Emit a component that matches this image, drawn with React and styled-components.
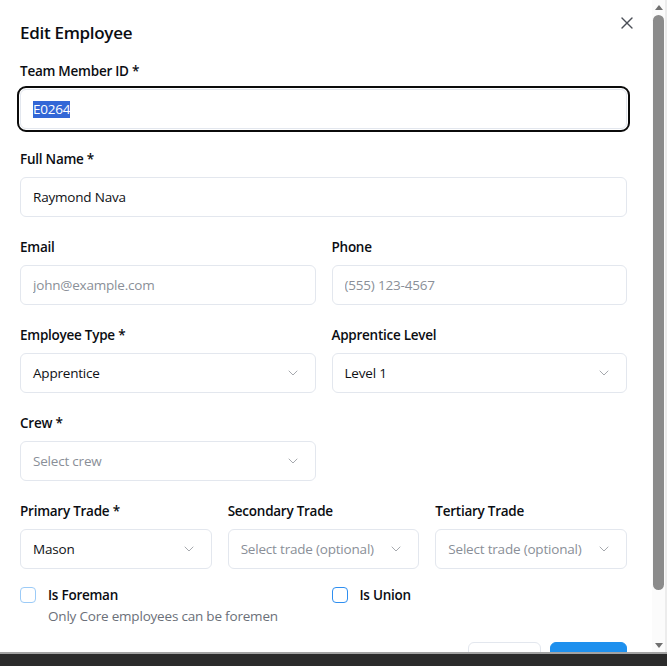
import React from 'react';
import styled, { createGlobalStyle } from 'styled-components';
import { X, ChevronDown } from 'lucide-react';

const GlobalStyle = createGlobalStyle`
  html, body {
    margin: 0;
    padding: 0;
    height: 100%;
    overflow: hidden;
    background: #ffffff;
  }
  body {
    font-family: 'Open Sans', 'Noto Sans', Arial, sans-serif;
    color: #0f1115;
  }
  * {
    box-sizing: border-box;
  }
`;

const Screen = styled.div`
  display: flex;
  flex-direction: column;
  height: 666px;
`;

const Window = styled.div`
  flex: 1;
  min-height: 0;
  display: flex;
`;

const Viewport = styled.div`
  flex: 1;
  min-width: 0;
  overflow: hidden;
  background: #ffffff;
`;

const Scrollbar = styled.div`
  width: 15px;
  flex-shrink: 0;
  display: flex;
  flex-direction: column;
  align-items: center;
  background: #fbfbfb;
  border-right: 2px solid #ececec;
`;

const Arrow = styled.span`
  height: 14px;
  display: flex;
  align-items: center;
  justify-content: center;

  &::before {
    content: '';
    border-left: 4.5px solid transparent;
    border-right: 4.5px solid transparent;
    ${(p) =>
      p.$down
        ? 'border-top: 5px solid #707070; margin-top: 1px;'
        : 'border-bottom: 5px solid #707070; margin-top: 1px;'}
  }
`;

const Track = styled.div`
  flex: 1;
  width: 100%;
  display: flex;
  justify-content: center;
  padding-top: 1px;
`;

const Thumb = styled.div`
  width: 11px;
  height: 575px;
  border-radius: 6px;
  background: #8b8b8b;
`;

const Dialog = styled.div`
  position: relative;
  padding: 19px 25px 24px 20px;
`;

const Title = styled.h2`
  margin: 0 0 14px;
  font-size: 17px;
  line-height: 28px;
  font-weight: 600;
  letter-spacing: -0.3px;
  color: #0b0d12;
`;

const CloseButton = styled.button`
  position: absolute;
  top: 13px;
  right: 15px;
  display: flex;
  padding: 0;
  border: 0;
  background: none;
  color: #4b4f57;
  cursor: pointer;
`;

const Form = styled.div`
  display: flex;
  flex-direction: column;
  gap: 20px;
`;

const Row = styled.div`
  display: grid;
  grid-template-columns: repeat(${(p) => p.$cols || 1}, 1fr);
  gap: 16px;
`;

const Field = styled.div`
  display: flex;
  flex-direction: column;
  gap: 8px;
  min-width: 0;
`;

const Label = styled.label`
  font-size: 13.5px;
  line-height: 20px;
  font-weight: 600;
  letter-spacing: -0.25px;
  color: #0b0d12;
`;

const Input = styled.input`
  height: 40px;
  width: 100%;
  padding: 0 12px;
  border: 1px solid #e3e7ee;
  border-radius: 6px;
  font-family: inherit;
  font-size: 13.5px;
  letter-spacing: -0.2px;
  color: #0f1115;
  background: #ffffff;
  outline: none;

  &::placeholder {
    color: #8a8f98;
  }
`;

const FocusedBox = styled.div`
  height: 40px;
  display: flex;
  align-items: center;
  padding: 0 12px;
  border: 1px solid #e3e7ee;
  border-radius: 6px;
  outline: 2px solid #0b0b0b;
  outline-offset: 1px;
  font-size: 13.5px;
  letter-spacing: -0.2px;
`;

const Selected = styled.span`
  background: #3367d6;
  color: #ffffff;
  line-height: 17px;
`;

const Select = styled.div`
  height: 40px;
  display: flex;
  align-items: center;
  justify-content: space-between;
  gap: 8px;
  padding: 0 14px 0 12px;
  border: 1px solid #e3e7ee;
  border-radius: 6px;
  font-size: 13.5px;
  letter-spacing: -0.2px;
  white-space: nowrap;
  overflow: hidden;
  color: ${(p) => (p.$placeholder ? '#8a8f98' : '#0f1115')};

  svg {
    flex-shrink: 0;
    color: #a6a9ae;
  }
`;

const Checks = styled.div`
  display: grid;
  grid-template-columns: 1fr 1fr;
  align-items: start;
  gap: 16px;
  margin-top: -4px;
`;

const CheckItem = styled.div`
  display: grid;
  grid-template-columns: 16px 1fr;
  column-gap: 12px;
  align-items: center;
`;

const Box = styled.span`
  width: 16px;
  height: 16px;
  border-radius: 4px;
  border: 1px solid ${(p) => (p.$strong ? '#2f8ff0' : '#9ccbf7')};
  background: #ffffff;
`;

const CheckLabel = styled.span`
  font-size: 13.5px;
  line-height: 20px;
  font-weight: 600;
  letter-spacing: -0.25px;
  color: #0b0d12;
`;

const Hint = styled.span`
  grid-column: 2;
  margin-top: 1px;
  font-size: 13.5px;
  line-height: 20px;
  letter-spacing: -0.2px;
  color: #6b7079;
`;

const Footer = styled.div`
  display: flex;
  justify-content: flex-end;
  gap: 9px;
  margin-top: 16px;
`;

const Button = styled.button`
  height: 40px;
  padding: 0 14.5px;
  border-radius: 6px;
  font-family: inherit;
  font-size: 13.5px;
  font-weight: 600;
  letter-spacing: -0.25px;
  border: 1px solid ${(p) => (p.$primary ? '#1e90ee' : '#e3e7ee')};
  background: ${(p) => (p.$primary ? '#1e90ee' : '#ffffff')};
  color: ${(p) => (p.$primary ? '#ffffff' : '#0f1115')};
`;

const Taskbar = styled.div`
  height: 14px;
  flex-shrink: 0;
  background: #2b2b2b;
  border-top: 2px solid #a3a3a3;
`;

const SelectBox = ({ value, placeholder }) => (
  <Select $placeholder={!value}>
    <span>{value || placeholder}</span>
    <ChevronDown size={16} strokeWidth={1.5} />
  </Select>
);

export default function App() {
  return (
    <>
      <GlobalStyle />
      <Screen>
        <Window>
          <Viewport>
            <Dialog>
              <Title>Edit Employee</Title>
              <CloseButton aria-label="Close">
                <X size={20} strokeWidth={1.6} />
              </CloseButton>
              <Form>
                <Field>
                  <Label>Team Member ID *</Label>
                  <FocusedBox>
                    <Selected>E0264</Selected>
                  </FocusedBox>
                </Field>
                <Field>
                  <Label>Full Name *</Label>
                  <Input defaultValue="Raymond Nava" />
                </Field>
                <Row $cols={2}>
                  <Field>
                    <Label>Email</Label>
                    <Input placeholder="john@example.com" />
                  </Field>
                  <Field>
                    <Label>Phone</Label>
                    <Input placeholder="(555) 123-4567" />
                  </Field>
                </Row>
                <Row $cols={2}>
                  <Field>
                    <Label>Employee Type *</Label>
                    <SelectBox value="Apprentice" />
                  </Field>
                  <Field>
                    <Label>Apprentice Level</Label>
                    <SelectBox value="Level 1" />
                  </Field>
                </Row>
                <Row $cols={2}>
                  <Field>
                    <Label>Crew *</Label>
                    <SelectBox placeholder="Select crew" />
                  </Field>
                </Row>
                <Row $cols={3}>
                  <Field>
                    <Label>Primary Trade *</Label>
                    <SelectBox value="Mason" />
                  </Field>
                  <Field>
                    <Label>Secondary Trade</Label>
                    <SelectBox placeholder="Select trade (optional)" />
                  </Field>
                  <Field>
                    <Label>Tertiary Trade</Label>
                    <SelectBox placeholder="Select trade (optional)" />
                  </Field>
                </Row>
                <Checks>
                  <CheckItem>
                    <Box />
                    <CheckLabel>Is Foreman</CheckLabel>
                    <Hint>Only Core employees can be foremen</Hint>
                  </CheckItem>
                  <CheckItem>
                    <Box $strong />
                    <CheckLabel>Is Union</CheckLabel>
                  </CheckItem>
                </Checks>
              </Form>
              <Footer>
                <Button>Cancel</Button>
                <Button $primary>Update</Button>
              </Footer>
            </Dialog>
          </Viewport>
          <Scrollbar>
            <Arrow />
            <Track>
              <Thumb />
            </Track>
            <Arrow $down />
          </Scrollbar>
        </Window>
        <Taskbar />
      </Screen>
    </>
  );
}
